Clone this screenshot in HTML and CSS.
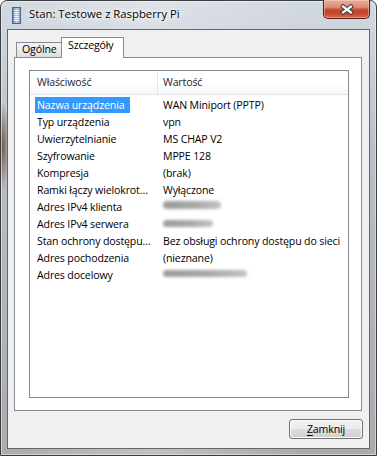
FILE: index.html
```html
<!DOCTYPE html>
<html lang="pl">
<head>
<meta charset="utf-8">
<title>Stan: Testowe z Raspberry Pi</title>
<link rel="stylesheet" href="styles.css">
</head>
<body>
<div class="window">
  <div class="titlebar">
    <svg class="app-icon" width="9" height="17" viewBox="0 0 9 17">
      <defs>
        <linearGradient id="ig" x1="0" y1="0" x2="1" y2="0">
          <stop offset="0" stop-color="#5f7fae"/>
          <stop offset="0.5" stop-color="#b7cde9"/>
          <stop offset="1" stop-color="#7b98c2"/>
        </linearGradient>
      </defs>
      <rect x="0.5" y="0.5" width="8" height="16" fill="url(#ig)" stroke="#4a6690"/>
      <g stroke="#eef4fc" stroke-width="1">
        <line x1="2" y1="3.5" x2="7" y2="3.5"/>
        <line x1="2" y1="5.5" x2="7" y2="5.5"/>
        <line x1="2" y1="7.5" x2="7" y2="7.5"/>
        <line x1="2" y1="9.5" x2="7" y2="9.5"/>
        <line x1="2" y1="11.5" x2="7" y2="11.5"/>
        <line x1="2" y1="13.5" x2="7" y2="13.5"/>
      </g>
    </svg>
    <span class="title">Stan: Testowe z Raspberry Pi</span>
    <div class="close">
      <svg width="14" height="11" viewBox="0 0 14 11">
        <g stroke-linecap="square">
          <path d="M3 2.5 L11 8.5 M11 2.5 L3 8.5" stroke="#3b3b3b" stroke-width="4.2"/>
          <path d="M3 2.5 L11 8.5 M11 2.5 L3 8.5" stroke="#ffffff" stroke-width="2.2"/>
        </g>
      </svg>
    </div>
  </div>
  <div class="client">
    <div class="tabs">
      <div class="tab">Ogólne</div>
      <div class="tab active">Szczegóły</div>
    </div>
    <div class="panel">
      <div class="listview">
        <div class="lv-header">
          <div class="hcell c1">Właściwość</div>
          <div class="hcell c2">Wartość</div>
        </div>
        <div class="lv-body">
          <div class="row sel"><div class="c1"><span class="lbl">Nazwa urządzenia</span></div><div class="c2">WAN Miniport (PPTP)</div></div>
          <div class="row"><div class="c1"><span class="lbl">Typ urządzenia</span></div><div class="c2">vpn</div></div>
          <div class="row"><div class="c1"><span class="lbl">Uwierzytelnianie</span></div><div class="c2">MS CHAP V2</div></div>
          <div class="row"><div class="c1"><span class="lbl">Szyfrowanie</span></div><div class="c2">MPPE 128</div></div>
          <div class="row"><div class="c1"><span class="lbl">Kompresja</span></div><div class="c2">(brak)</div></div>
          <div class="row"><div class="c1"><span class="lbl">Ramki łączy wielokrot…</span></div><div class="c2">Wyłączone</div></div>
          <div class="row"><div class="c1"><span class="lbl">Adres IPv4 klienta</span></div><div class="c2"><span class="blur blur-a"></span></div></div>
          <div class="row"><div class="c1"><span class="lbl">Adres IPv4 serwera</span></div><div class="c2"><span class="blur blur-b"></span></div></div>
          <div class="row"><div class="c1"><span class="lbl">Stan ochrony dostępu…</span></div><div class="c2">Bez obsługi ochrony dostępu do sieci</div></div>
          <div class="row"><div class="c1"><span class="lbl">Adres pochodzenia</span></div><div class="c2">(nieznane)</div></div>
          <div class="row"><div class="c1"><span class="lbl">Adres docelowy</span></div><div class="c2"><span class="blur blur-c"></span></div></div>
        </div>
      </div>
    </div>
    <div class="footer">
      <button class="btn" type="button"><u>Z</u>amknij</button>
    </div>
  </div>
</div>
</body>
</html>
```

FILE: styles.css
```css
* { box-sizing: border-box; }
html, body { margin: 0; padding: 0; }
body {
  width: 377px;
  height: 456px;
  overflow: hidden;
  background: #ffffff;
  font-family: "Open Sans", "Noto Sans", sans-serif;
  font-size: 10.6px;
  letter-spacing: -0.15px;
  color: #000;
}
.window {
  width: 377px;
  height: 456px;
  display: flex;
  flex-direction: column;
  padding: 0 6px 6px 6px;
  border: 1px solid #3a3d42;
  border-radius: 7px 7px 0 0;
  box-shadow: inset 0 0 0 1px rgba(255,255,255,0.45);
  background:
    radial-gradient(ellipse 6px 45px at 2px 145px, rgba(110,72,52,0.85), rgba(110,72,52,0) 100%),
    linear-gradient(90deg, rgba(255,255,255,0) 0, rgba(255,255,255,0.25) 40%, rgba(255,255,255,0) 80%),
    linear-gradient(180deg, #d3d9e0 0, #cdd4dc 30px, #b8bec5 160px, #a9abae 100%);
}
.titlebar {
  flex: none;
  height: 28px;
  display: flex;
  align-items: flex-start;
}
.app-icon {
  flex: none;
  margin: 6px 0 0 5px;
}
.title {
  margin: 5px 0 0 8px;
  font-size: 11.3px;
  letter-spacing: 0;
  line-height: 16px;
  white-space: nowrap;
  color: #000;
  text-shadow: 0 0 6px #fff, 0 0 10px #fff, 0 0 3px #fff;
}
.close {
  flex: none;
  margin: -1px 0 0 auto;
  width: 47px;
  height: 19px;
  border: 1px solid #4d1f16;
  border-top: none;
  border-radius: 0 0 5px 5px;
  background: linear-gradient(180deg, #e9ad9c 0, #dc8d78 40%, #c6452a 55%, #c7482c 75%, #d9694a 100%);
  box-shadow: inset 0 0 0 1px rgba(255,220,200,0.45);
  display: flex;
  align-items: center;
  justify-content: center;
  padding-top: 1px;
}
.client {
  flex: 1;
  display: flex;
  flex-direction: column;
  border: 1px solid #63676d;
  background: #f0f0f0;
}
.tabs {
  flex: none;
  height: 28px;
  display: flex;
  align-items: flex-end;
  padding: 7px 0 0 8px;
  margin-bottom: -1px;
  position: relative;
  z-index: 1;
}
.tab {
  width: 46px;
  height: 15px;
  margin-bottom: 1px;
  padding-left: 5px;
  line-height: 12px;
  border: 1px solid #898c95;
  border-bottom: none;
  background: linear-gradient(180deg, #f4f4f4 0, #ebebeb 50%, #dedede 100%);
  white-space: nowrap;
}
.tab.active {
  width: 63px;
  height: 21px;
  margin-bottom: 0;
  margin-left: -1px;
  padding-left: 6px;
  line-height: 15px;
  background: #fff;
}
.panel {
  flex: 1;
  display: flex;
  margin: 0 7px 0 6px;
  padding: 12px 12px 12px 14px;
  border: 1px solid #898c95;
  background: #fff;
}
.listview {
  flex: 1;
  border: 1px solid #828790;
  background: #fff;
  overflow: hidden;
}
.lv-header {
  display: flex;
  height: 24px;
  border-bottom: 1px solid #e5e5e5;
  background: linear-gradient(180deg, #ffffff 0, #ffffff 55%, #f5f6f7 100%);
}
.hcell {
  line-height: 23px;
  white-space: nowrap;
  color: #1c2433;
}
.hcell.c1 {
  width: 128px;
  flex: none;
  padding-left: 7px;
  border-right: 1px solid #e3e7ec;
}
.hcell.c2 {
  padding-left: 5px;
}
.lv-body {
  padding-top: 1px;
}
.row {
  display: flex;
  height: 17px;
  padding-top: 1px;
}
.row .c1 {
  width: 128px;
  flex: none;
  padding-left: 5px;
  overflow: hidden;
  white-space: nowrap;
}
.lbl {
  display: inline-block;
  height: 16px;
  line-height: 14px;
  padding: 0 5px 0 1px;
  border: 1px dotted transparent;
  white-space: nowrap;
}
.row.sel .lbl {
  background: #3399ff;
  color: #fff;
  border-color: #c8752c;
}
.row .c2 {
  padding-left: 5px;
  line-height: 16px;
  white-space: nowrap;
}
.blur {
  display: inline-block;
  vertical-align: top;
  margin-top: 4px;
  height: 7px;
  border-radius: 4px;
  filter: blur(1.8px);
  background: linear-gradient(90deg, #9c9c9c, #a8a8a8 55%, #c4c4c4);
}
.blur-a { width: 58px; height: 8px; margin-top: 2px; }
.blur-b { width: 50px; }
.blur-c { width: 84px; margin-top: 3px; }
.footer {
  flex: none;
  height: 37px;
  display: flex;
  justify-content: flex-end;
  align-items: flex-start;
  padding: 8px 6px 0 0;
}
.btn {
  width: 74px;
  height: 20px;
  margin: 0;
  padding: 0;
  font: inherit;
  letter-spacing: inherit;
  color: #000;
  border: 1px solid #707070;
  border-radius: 3px;
  background: linear-gradient(180deg, #f2f2f2 0, #ebebeb 50%, #dddddd 51%, #cfcfcf 100%);
  box-shadow: inset 0 0 0 1px #fcfcfc;
  display: flex;
  align-items: center;
  justify-content: center;
  line-height: 16px;
}
.btn u {
  text-decoration-thickness: 1px;
  text-underline-offset: 2px;
}
```
